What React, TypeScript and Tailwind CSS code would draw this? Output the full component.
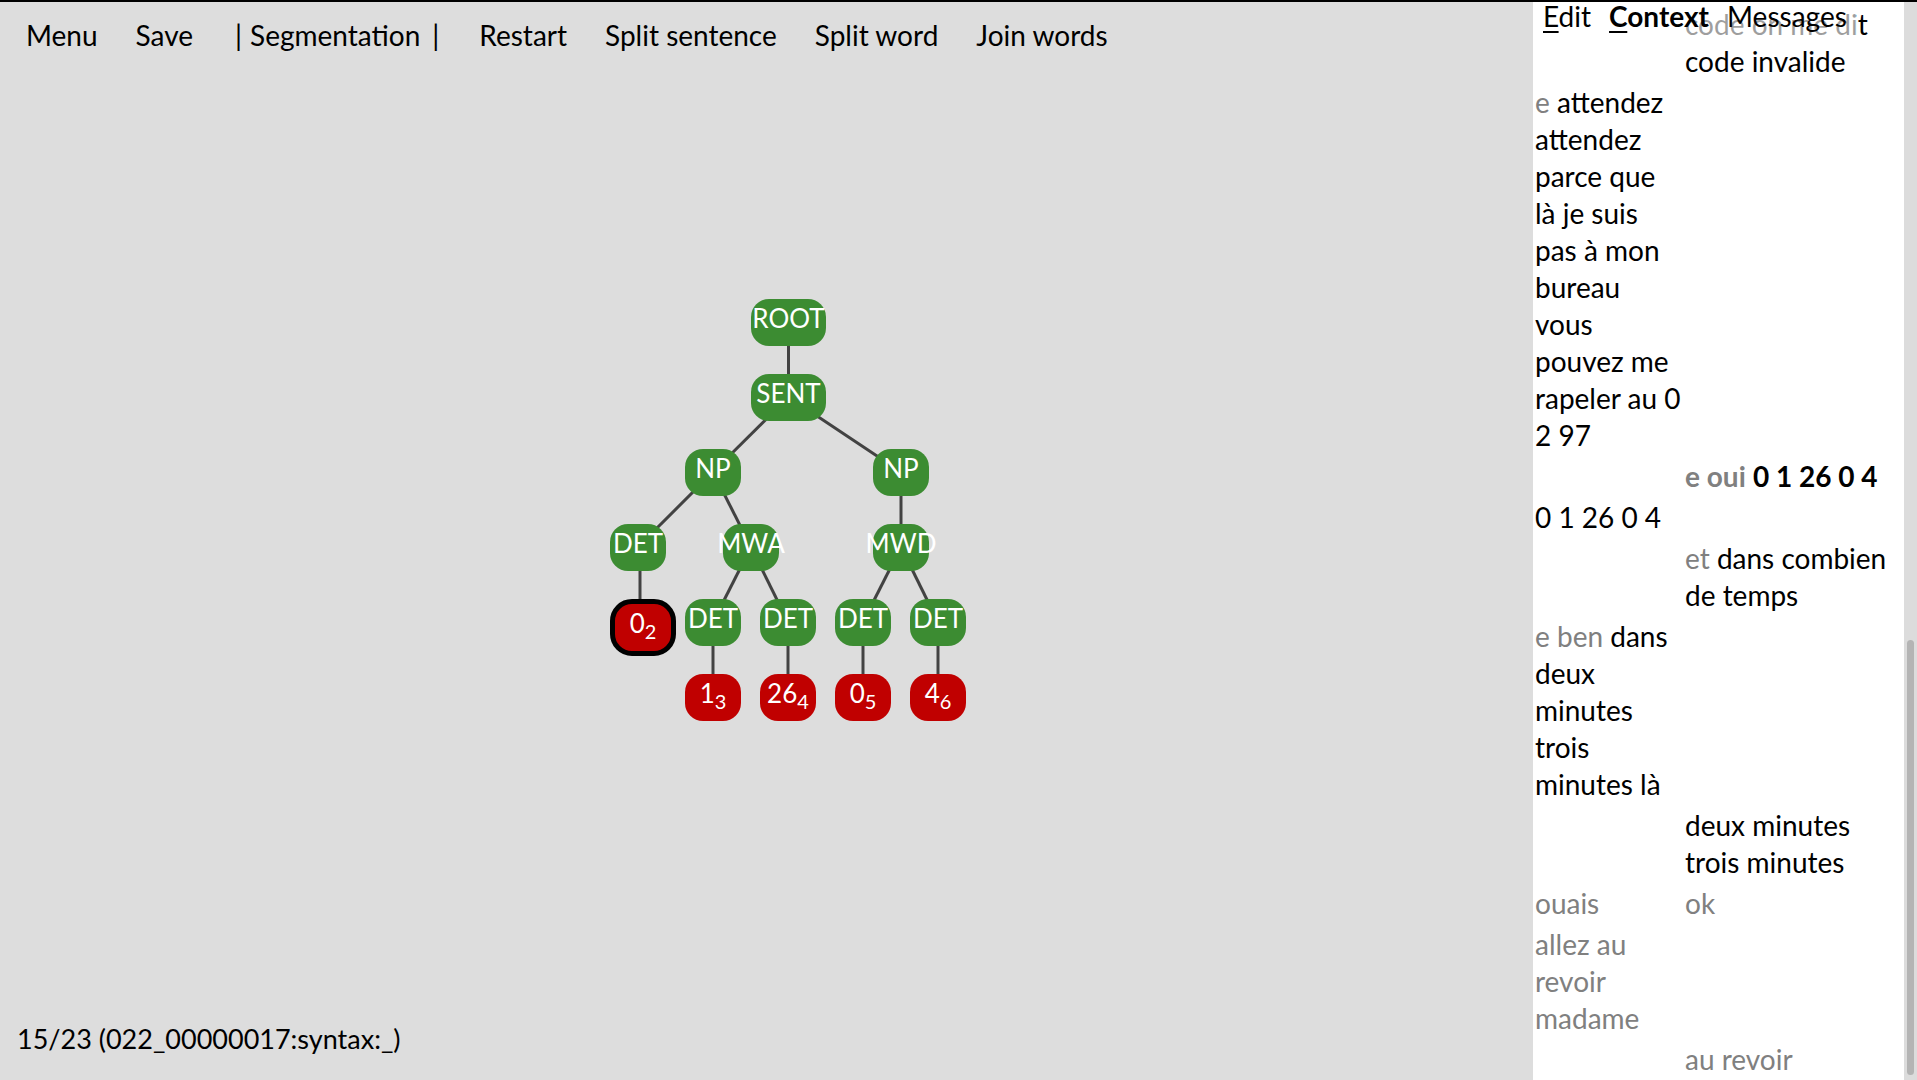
import React from "react";

type N = { label: React.ReactNode; x: number; y: number; w: number; kind: "g" | "r" | "sel" };

const Leaf = ({ a, b }: { a: string; b: string }) => (
  <span>
    {a}
    <span className="relative top-[6px] text-[20px]">{b}</span>
  </span>
);

const nodes: N[] = [
  { label: "ROOT", x: 151, y: 9, w: 75, kind: "g" },
  { label: "SENT", x: 151, y: 84, w: 75, kind: "g" },
  { label: "NP", x: 85, y: 159, w: 56, kind: "g" },
  { label: "NP", x: 273, y: 159, w: 56, kind: "g" },
  { label: "DET", x: 10, y: 234, w: 56, kind: "g" },
  { label: "MWA", x: 123, y: 234, w: 56, kind: "g" },
  { label: "MWD", x: 273, y: 234, w: 56, kind: "g" },
  { label: <Leaf a="0" b="2" />, x: 10, y: 309, w: 56, kind: "sel" },
  { label: "DET", x: 85, y: 309, w: 56, kind: "g" },
  { label: "DET", x: 160, y: 309, w: 56, kind: "g" },
  { label: "DET", x: 235, y: 309, w: 56, kind: "g" },
  { label: "DET", x: 310, y: 309, w: 56, kind: "g" },
  { label: <Leaf a="1" b="3" />, x: 85, y: 384, w: 56, kind: "r" },
  { label: <Leaf a="26" b="4" />, x: 160, y: 384, w: 56, kind: "r" },
  { label: <Leaf a="0" b="5" />, x: 235, y: 384, w: 56, kind: "r" },
  { label: <Leaf a="4" b="6" />, x: 310, y: 384, w: 56, kind: "r" },
];

const edges: [number, number, number, number][] = [
  [188.5, 32, 188.5, 107],
  [188.5, 107, 113, 182],
  [188.5, 107, 301, 182],
  [113, 182, 38, 257],
  [113, 182, 151, 257],
  [301, 182, 301, 257],
  [40, 257, 40, 332],
  [151, 257, 113, 332],
  [151, 257, 188, 332],
  [301, 257, 263, 332],
  [301, 257, 338, 332],
  [113, 332, 113, 407],
  [188, 332, 188, 407],
  [263, 332, 263, 407],
  [338, 332, 338, 407],
];

const G = ({ children, bold }: { children: React.ReactNode; bold?: boolean }) => (
  <span className={"text-[#808080]" + (bold ? " font-bold" : "")}>{children}</span>
);

type Lines = React.ReactNode[] | null;

const rows: [Lines, Lines][] = [
  [null, ["code on me dit", "code invalide"]],
  [
    [
      <>
        <G>e</G> attendez
      </>,
      "attendez",
      "parce que",
      "là je suis",
      "pas à mon",
      "bureau",
      "vous",
      "pouvez me",
      "rapeler au 0",
      "2 97",
    ],
    null,
  ],
  [
    null,
    [
      <>
        <G bold>e oui</G> <span className="font-bold">0 1 26 0 4</span>
      </>,
    ],
  ],
  [["0 1 26 0 4"], null],
  [
    null,
    [
      <>
        <G>et</G> dans combien
      </>,
      "de temps",
    ],
  ],
  [
    [
      <>
        <G>e ben</G> dans
      </>,
      "deux",
      "minutes",
      "trois",
      "minutes là",
    ],
    null,
  ],
  [null, ["deux minutes", "trois minutes"]],
  [[<G>ouais</G>], [<G>ok</G>]],
  [[<G>allez au</G>, <G>revoir</G>, <G>madame</G>], null],
  [null, [<G>au revoir</G>]],
];

const Cell = ({ lines }: { lines: Lines }) => (
  <>
    {lines
      ? lines.map((l, i) => (
          <div key={i} className="whitespace-nowrap">
            {l}
          </div>
        ))
      : null}
  </>
);

export default function App() {
  return (
    <div
      className="flex w-[1917px] h-[1080px] border-t-2 border-black overflow-hidden text-black"
      style={{ fontFamily: "Lato, 'Open Sans', sans-serif" }}
    >
      {/* main area */}
      <div className="relative flex flex-col w-[1533px] h-full bg-[#dddddd]">
        <div className="flex items-center h-[65px] pl-[26px] gap-[38px] text-[28px] whitespace-nowrap">
          <span>Menu</span>
          <span>Save</span>
          <span className="ml-[4px] mr-[2px]">
            |<span className="ml-[8px] mr-[12px]">Segmentation</span>|
          </span>
          <span>Restart</span>
          <span>Split sentence</span>
          <span>Split word</span>
          <span>Join words</span>
        </div>
        <div className="flex-1" />
        <div className="flex items-center h-[82px] pl-[17px] text-[27px]">15/23 (022_00000017:syntax:_)</div>

        {/* tree canvas */}
        <div className="absolute left-[600px] top-[288px] w-[380px] h-[440px]">
          <svg className="absolute inset-0" width={380} height={440}>
            {edges.map(([x1, y1, x2, y2], i) => (
              <line key={i} x1={x1} y1={y1} x2={x2} y2={y2} stroke="#424242" strokeWidth={3} />
            ))}
          </svg>
          {nodes.map((n, i) => (
            <div
              key={i}
              className={
                "absolute box-content flex justify-center whitespace-nowrap text-white text-[26px] leading-[34px] pt-[2px] " +
                (n.kind === "g"
                  ? "bg-[#3c8c32] rounded-[18px]"
                  : n.kind === "r"
                  ? "bg-[#c00000] rounded-[18px]"
                  : "bg-[#c00000] rounded-[22px] border-[5px] border-black")
              }
              style={{ left: n.x, top: n.y, width: n.w, height: 45 }}
            >
              {n.label}
            </div>
          ))}
        </div>
      </div>

      {/* side panel */}
      <div className="flex w-[384px] h-full bg-white">
        <div className="relative w-[371px] h-full overflow-hidden">
          <div className="flex flex-col gap-[4px] pt-[4px] text-[28px] leading-[37px]">
            {rows.map(([l, r], i) => (
              <div key={i} className="grid grid-cols-[152px_1fr]">
                <div className="pl-[2px]">
                  <Cell lines={l} />
                </div>
                <div>
                  <Cell lines={r} />
                </div>
              </div>
            ))}
          </div>
          <div className="absolute top-0 left-0 h-[38px] flex gap-[18px] pl-[10px] pr-[9px] bg-[rgba(255,255,255,0.62)] text-[28px] leading-[29px] whitespace-nowrap">
            <span>
              <span className="underline underline-offset-[4px] decoration-[2px]">E</span>dit
            </span>
            <span className="font-bold">
              <span className="underline underline-offset-[4px] decoration-[2px]">C</span>ontext
            </span>
            <span>Messages</span>
          </div>
        </div>
        <div className="relative w-[13px] h-full bg-[#dcdcdc]">
          <div className="absolute left-[3px] top-[638px] w-[7px] h-[435px] rounded-full bg-[#b4b4b4]" />
        </div>
      </div>
    </div>
  );
}
